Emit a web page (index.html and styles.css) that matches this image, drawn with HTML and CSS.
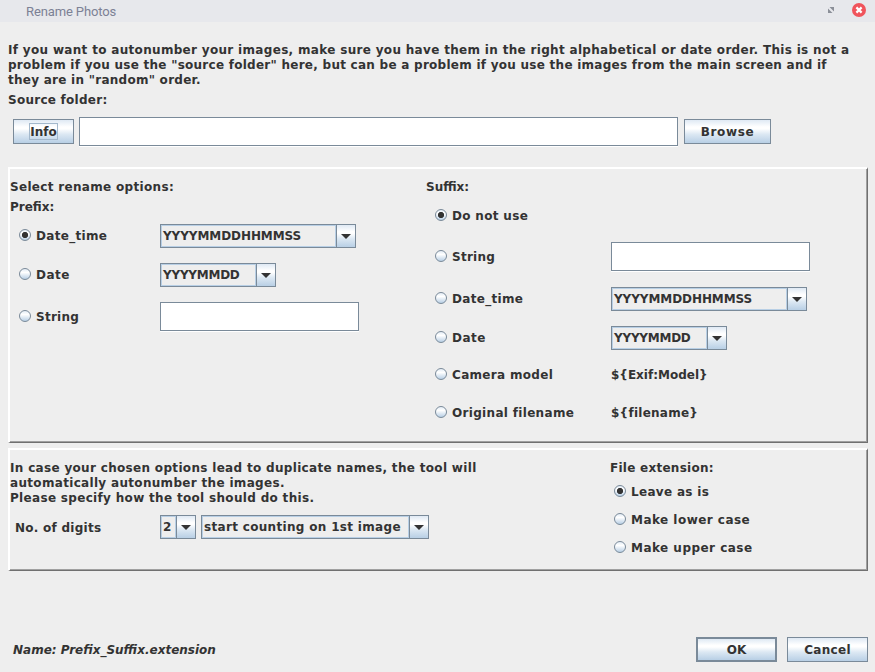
FILE: index.html
```html
<!DOCTYPE html>
<html lang="en">
<head>
<meta charset="utf-8">
<title>Rename Photos</title>
<link rel="stylesheet" href="styles.css">
</head>
<body>
<header class="titlebar">
  <span class="title">Rename Photos</span>
  <svg class="restore" width="8" height="8" viewBox="0 0 8 8"><path d="M2.500 1H7v4.500zM1 2.500L5.500 7H1z" fill="#8b8f98"/></svg>
  <svg class="close" width="14" height="14" viewBox="0 0 14 14"><circle cx="7" cy="7" r="7" fill="#f0545c"/><path d="M4.400 4.400l5.200 5.200M9.600 4.400l-5.200 5.200" stroke="#fff" stroke-width="2.200"/></svg>
</header>
<main class="dialog">
  <p class="intro">If you want to autonumber your images, make sure you have them in the right alphabetical or date order. This is not a<br><span class="snug">problem if you use the "source folder" here, but can be a problem if you use the images from the main screen and if</span><br><span class="snug">they are in "random" order.</span></p>
  <p class="source-label snug">Source folder:</p>
  <div class="source">
    <button class="button info"><span class="focus">Info</span></button>
    <div class="field source-field"></div>
    <button class="button browse">Browse</button>
  </div>

  <section class="panel options">
    <div class="prefix">
      <p class="heading">Select rename options:</p>
      <p class="heading second tight">Prefix:</p>
      <div class="rows prefix-rows">
        <label class="radio on"><i></i>Date_time</label>
        <div class="combo long"><span>YYYYMMDDHHMMSS</span><b></b></div>
        <label class="radio loose"><i></i>Date</label>
        <div class="combo short"><span>YYYYMMDD</span><b></b></div>
        <label class="radio snug"><i></i>String</label>
        <div class="field"></div>
      </div>
    </div>
    <div class="suffix">
      <p class="heading tight">Suffix:</p>
      <div class="rows suffix-rows">
        <label class="radio on"><i></i>Do not use</label>
        <span></span>
        <label class="radio snug"><i></i>String</label>
        <div class="field"></div>
        <label class="radio"><i></i>Date_time</label>
        <div class="combo long"><span>YYYYMMDDHHMMSS</span><b></b></div>
        <label class="radio loose"><i></i>Date</label>
        <div class="combo short"><span>YYYYMMDD</span><b></b></div>
        <label class="radio"><i></i>Camera model</label>
        <span class="value tight">${Exif:Model}</span>
        <label class="radio"><i></i>Original filename</label>
        <span class="value snug">${filename}</span>
      </div>
    </div>
  </section>

  <section class="panel numbering">
    <div class="duplicates">
      <p class="heading">In case your chosen options lead to duplicate names, the tool will<br>automatically autonumber the images.<br>Please specify how the tool should do this.</p>
      <div class="digits">
        <span class="digits-label snug">No. of digits</span>
        <div class="combo count"><span>2</span><b></b></div>
        <div class="combo start"><span>start counting on 1st image</span><b></b></div>
      </div>
    </div>
    <div class="extension">
      <p class="heading snug">File extension:</p>
      <div class="extension-rows">
        <label class="radio on"><i></i>Leave as is</label>
        <label class="radio loose"><i></i>Make lower case</label>
        <label class="radio loose"><i></i>Make upper case</label>
      </div>
    </div>
  </section>

  <footer class="footer">
    <span class="name">Name: Prefix_Suffix.extension</span>
    <button class="button default">OK</button>
    <button class="button">Cancel</button>
  </footer>
</main>
</body>
</html>
```
FILE: styles.css
```css
* { box-sizing: border-box; }
body {
  margin: 0;
  width: 875px;
  height: 672px;
  overflow: hidden;
  background: #eeeeee;
  color: #333333;
  font: bold 12px/15px "DejaVu Sans", sans-serif;
  letter-spacing: 0.32px;
  white-space: nowrap;
}
p { margin: 0; }
.snug { letter-spacing: 0.26px; }
.loose { letter-spacing: 0.47px; }
.tight { letter-spacing: 0; }
.titlebar {
  display: flex;
  height: 22px;
  padding: 3px 9px 0 26px;
  background: #e7e8ec;
}
.title { flex: 1; font: 13px/17px Roboto, sans-serif; letter-spacing: -0.12px; color: #7c8195; }
.restore { margin: 3px 17px 0 0; }
.dialog { padding: 21px 7px 0 8px; }
.source-label { margin-top: 5px; }
.source { display: flex; align-items: center; height: 29px; margin: 9px 0 0 5px; }
.button {
  width: 81px;
  height: 25px;
  padding: 2px 0 0;
  border: 1px solid #7a8a99;
  border-radius: 0;
  background: linear-gradient(#dfe9f4, #ffffff 30%, #ffffff 38%, #dce8f3 62%, #b8cfe5);
  color: inherit;
  font: inherit;
  letter-spacing: inherit;
}
.info { width: 61px; padding: 0; letter-spacing: 0; }
.browse { width: 87px; letter-spacing: 0.6px; }
.default { border-width: 2px; letter-spacing: 0; }
.focus { display: inline-block; height: 17px; border: 1px solid #a3b8cc; line-height: 17px; }
.field {
  width: 199px;
  height: 29px;
  border: 1px solid #7a8a99;
  background: #ffffff;
  box-shadow: 0 1px #ffffff;
}
.source-field { width: 599px; margin: 0 6px 0 5px; }
.panel {
  display: flex;
  width: 860px;
  border: solid;
  border-width: 2px 1px 1px 2px;
  border-color: #ffffff #707070 #707070 #ffffff;
  box-shadow: inset -1px -1px #a0a0a0;
}
.options { height: 276px; margin-top: 21px; padding-top: 11px; }
.prefix { width: 416px; }
.second { margin-top: 5px; }
.rows { display: grid; align-items: center; }
.rows .field { margin-bottom: 2px; }
.prefix-rows { grid-template: 40px 38px 46px / 141px auto; margin: 1px 0 0 9px; }
.suffix-rows { grid-template: 22px 60px 24px 54px 20px 56px / 176px auto; margin: 10px 0 0 9px; }
.radio { display: flex; align-items: center; }
.radio i {
  width: 12px;
  height: 12px;
  margin: 0 5px 3px 0;
  border: 1px solid #7a8a99;
  border-radius: 50%;
  background: linear-gradient(#e4edf6, #ffffff 35%, #b8cfe5);
}
.radio.on i { background: radial-gradient(circle, #333333 0 2.8px, transparent 3.3px), linear-gradient(#e4edf6, #ffffff 35%, #b8cfe5); }
.combo {
  display: flex;
  height: 24px;
  border: 1px solid #7a8a99;
}
.combo span {
  flex: 1;
  padding: 3px 0 0 1px;
  border: 1px solid #b8cfe5;
}
.long span { letter-spacing: -0.08px; }
.short span { letter-spacing: -0.25px; }
.combo b {
  display: flex;
  align-items: center;
  justify-content: center;
  width: 19px;
  border-left: 1px solid #7a8a99;
  background: linear-gradient(#dfe9f4, #ffffff 30%, #ffffff 38%, #dce8f3 62%, #b8cfe5);
}
.combo b::after {
  content: "";
  margin-top: 1px;
  border: 5px solid transparent;
  border-top-color: #333333;
  border-bottom: 0;
}
.long { width: 196px; }
.short { width: 116px; }
.count { width: 36px; }
.start { width: 228px; margin-left: 5px; }
.numbering { height: 123px; margin-top: 5px; padding-top: 11px; }
.duplicates { width: 600px; }
.digits { display: flex; align-items: center; margin-top: 9px; }
.digits-label { width: 150px; padding: 2px 0 0 5px; }
.extension-rows { display: grid; grid-auto-rows: 28px; margin: 2px 0 0 4px; }
.footer { display: flex; align-items: center; gap: 10px; margin-top: 66px; }
.name { flex: 1; padding: 2px 0 0 5px; font-style: italic; letter-spacing: 0; }
```
